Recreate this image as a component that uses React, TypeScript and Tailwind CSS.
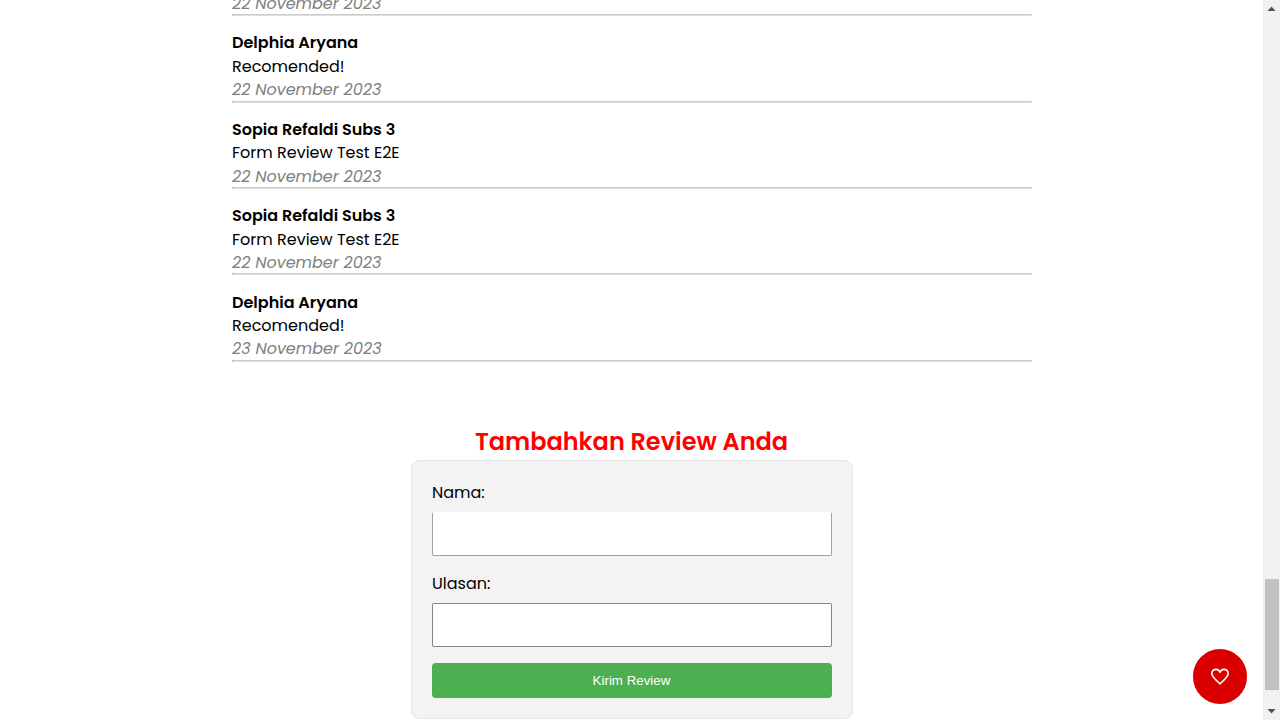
type Review = { name: string; text: string; date: string };

const reviews: Review[] = [
  { name: "Delphia Aryana", text: "Recomended!", date: "22 November 2023" },
  { name: "Delphia Aryana", text: "Recomended!", date: "22 November 2023" },
  { name: "Sopia Refaldi Subs 3", text: "Form Review Test E2E", date: "22 November 2023" },
  { name: "Sopia Refaldi Subs 3", text: "Form Review Test E2E", date: "22 November 2023" },
  { name: "Delphia Aryana", text: "Recomended!", date: "23 November 2023" },
];

function ReviewItem({ name, text, date }: Review) {
  return (
    <li className="h-[86.4px] pt-[15px] text-base leading-[23.4px] whitespace-nowrap">
      <p className="font-semibold">{name}</p>
      <p>{text}</p>
      <p className="text-[#808080] italic">{date}</p>
      <div className="-mt-[1px] h-[2px] border-t border-r border-b border-l border-t-[#cccccc] border-r-[#eeeeee] border-b-[#dedede] border-l-[#aaaaaa]" />
    </li>
  );
}

export default function App() {
  return (
    <div className="flex h-[720px] w-[1280px] overflow-hidden bg-white font-['Poppins',sans-serif] text-black">
      <main className="flex min-w-0 flex-1 flex-col items-center pl-px">
        <ul className="-mt-[70px] w-[800px] shrink-0">
          {reviews.map((r, i) => (
            <ReviewItem key={i} {...r} />
          ))}
        </ul>
        <h2 className="mt-[62px] h-9 shrink-0 pr-px text-2xl leading-9 font-semibold text-[#ff0000]">Tambahkan Review Anda</h2>
        <form className="flex h-[259px] w-[442px] shrink-0 flex-col rounded-lg border border-[#e6e6e6] bg-[#f3f3f3] px-5 pt-5">
          <label className="h-6 text-base leading-6">Nama:</label>
          <input className="mt-[7px] h-11 w-full shrink-0 rounded-[2px] border border-[#a0a0a0] border-t-white bg-white outline-none" />
          <label className="mt-4 h-6 text-base leading-6">Ulasan:</label>
          <input className="mt-[7px] h-11 w-full shrink-0 rounded-[2px] border border-[#858585] bg-white outline-none" />
          <button type="button" className="mt-4 h-[35px] shrink-0 rounded bg-[#4caf50] pt-px pr-px font-['Liberation_Sans',Arial,sans-serif] text-[13.333px] text-white">
            Kirim Review
          </button>
        </form>
      </main>
      <div className="flex w-[17px] shrink-0 flex-col items-center bg-[#f1f1f1]">
        <svg className="h-[17px] w-[17px]" viewBox="0 0 17 17" fill="#505050"><path d="M8.5 6.5 12.5 11h-8z" /></svg>
        <div className="mt-[562px] h-[111px] w-[14px] bg-[#c1c1c1]" />
        <svg className="mt-[13px] h-[17px] w-[17px]" viewBox="0 0 17 17" fill="#505050"><path d="M4.5 6h8l-4 4.5z" /></svg>
      </div>
      <button type="button" aria-label="Favorit" className="fixed top-[649.4px] left-[1192.7px] flex h-[54.6px] w-[54.6px] items-center justify-center rounded-full bg-[#db0000]">
        <svg className="h-[18px] w-[20px]" viewBox="0 0 20 18" fill="none" stroke="#ffffff" strokeWidth="1.6" strokeLinejoin="round">
          <path d="M10 4.3C9.2 2.4 7.6 1.4 5.9 1.4 3.5 1.4 1.8 3.2 1.8 5.6 1.8 9 5.9 12 10 15.8 14.1 12 18.2 9 18.2 5.6 18.2 3.2 16.5 1.4 14.1 1.4 12.4 1.4 10.8 2.4 10 4.3Z" />
        </svg>
      </button>
    </div>
  );
}
